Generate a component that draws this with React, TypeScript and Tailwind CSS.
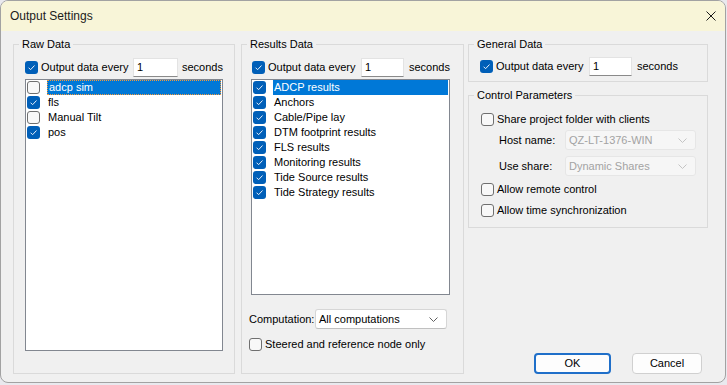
import React from 'react';

const FONT = "font-['Liberation_Sans',Arial,sans-serif]";

const Check = ({ checked }: { checked: boolean }) =>
  checked ? (
    <span className="flex h-[13px] w-[13px] shrink-0 items-center justify-center rounded-[3px] bg-[#005fb8]">
      <svg width="9" height="9" viewBox="0 0 9 9">
        <path d="M1.6 4.7 L3.6 6.7 L7.5 2.5" fill="none" stroke="#e8f0fa" strokeWidth="1" />
      </svg>
    </span>
  ) : (
    <span className="h-[13px] w-[13px] shrink-0 rounded-[3px] border border-[#6f6f6f] bg-[#f8f8f8]" />
  );

const Chevron = ({ color }: { color: string }) => (
  <svg width="9" height="5" viewBox="0 0 9 5">
    <path d="M0.5 0.5 L4.5 4.5 L8.5 0.5" fill="none" stroke={color} strokeWidth="1" />
  </svg>
);

interface SecondsRowProps {
  checkMl: string;
  labelW: string;
  inputW: string;
  secMl: string;
}

const SecondsRow = ({ checkMl, labelW, inputW, secMl }: SecondsRowProps) => (
  <div className="flex h-[19px] items-center">
    <span className={checkMl}>
      <Check checked />
    </span>
    <span className={`ml-[3px] ${labelW}`}>Output data every</span>
    <div className={`flex h-[19px] ${inputW} items-center border border-[#e3e3e3] border-b-[#8a8a8a] bg-white pl-[3px]`}>
      1
    </div>
    <span className={secMl}>seconds</span>
  </div>
);

interface Item {
  label: string;
  checked: boolean;
}

const ListBox = ({ items, w, h, focus }: { items: Item[]; w: string; h: string; focus: boolean }) => (
  <div className={`mt-[2px] ${w} ${h} border border-[#828790] bg-white`}>
    {items.map((it, i) => (
      <div key={it.label} className="flex h-[15px] items-center pl-[1px]">
        <Check checked={it.checked} />
        <span
          className={`ml-[7px] mr-[1px] flex h-[15px] flex-1 items-center pl-[1px] ${
            i === 0 ? 'bg-[#0078d7] text-white' : ''
          } ${i === 0 && focus ? 'border border-dotted border-[#f59a3a] pl-0' : ''}`}
        >
          {it.label}
        </span>
      </div>
    ))}
  </div>
);

const Combo = ({ text, w, disabled }: { text: string; w: string; disabled?: boolean }) => (
  <div
    className={`flex h-[20px] ${w} items-center justify-between rounded-[3px] border pl-[3px] pr-[8px] ${
      disabled ? 'border-[#e6e6e6] bg-[#f6f6f6] text-[#a3a3a3]' : 'border-[#d6d6d6] border-b-[#c0c0c0] bg-white'
    }`}
  >
    <span>{text}</span>
    <Chevron color={disabled ? '#c4c4c4' : '#606060'} />
  </div>
);

const Legend = ({ children }: { children: React.ReactNode }) => (
  <legend className="ml-[5px] px-[3px] leading-[13px]">{children}</legend>
);

const CheckRow = ({ label, checked, className }: { label: string; checked: boolean; className: string }) => (
  <div className={`flex h-[15px] items-center ${className}`}>
    <Check checked={checked} />
    <span className="ml-[3px]">{label}</span>
  </div>
);

export default function App() {
  const raw: Item[] = [
    { label: 'adcp sim', checked: false },
    { label: 'fls', checked: true },
    { label: 'Manual Tilt', checked: false },
    { label: 'pos', checked: true },
  ];
  const results: Item[] = [
    'ADCP results',
    'Anchors',
    'Cable/Pipe lay',
    'DTM footprint results',
    'FLS results',
    'Monitoring results',
    'Tide Source results',
    'Tide Strategy results',
  ].map((label) => ({ label, checked: true }));

  return (
    <div className={`h-[385px] w-[727px] bg-[#e9e9ee] text-[11px] text-black ${FONT}`}>
      <div className="flex h-[383px] w-[726px] flex-col overflow-hidden rounded-[8px] border border-[#a2a2a2] bg-[#f0f0f0]">
        {/* Title bar */}
        <div className="flex h-[30px] shrink-0 items-center justify-between bg-[#f8f5d8] pl-[9px]">
          <span className="text-[12px] text-[#1b1b1b]">Output Settings</span>
          <svg width="10" height="10" viewBox="0 0 10 10" className="mr-[9px]">
            <path d="M0.5 0.5 L9.5 9.5 M9.5 0.5 L0.5 9.5" stroke="#1a1a1a" strokeWidth="1" />
          </svg>
        </div>

        {/* Body */}
        <div className="flex pl-[12px] pt-[7px]">
          {/* Raw Data */}
          <fieldset className="w-[222px] border border-[#dadada]">
            <Legend>Raw Data</Legend>
            <div className="px-[11px] pb-[16px] pt-[7px]">
              <SecondsRow checkMl="" labelW="w-[92px]" inputW="w-[45px]" secMl="ml-[4px]" />
              <ListBox items={raw} w="w-[198px]" h="h-[272px]" focus />
            </div>
          </fieldset>

          {/* Results Data */}
          <fieldset className="ml-[6px] w-[223px] border border-[#dadada]">
            <Legend>Results Data</Legend>
            <div className="px-[9px] pb-[15px] pt-[7px]">
              <SecondsRow checkMl="ml-[1px]" labelW="w-[93px]" inputW="w-[43px]" secMl="ml-[5px]" />
              <ListBox items={results} w="w-[199px]" h="h-[216px]" focus={false} />
              <div className="-ml-[2px] mt-[14px] flex items-center">
                <span className="w-[66px]">Computation:</span>
                <Combo text="All computations" w="w-[132px]" />
              </div>
              <CheckRow label="Steered and reference node only" checked={false} className="-ml-[2px] mt-[8px]" />
            </div>
          </fieldset>

          {/* Right column */}
          <div className="ml-[4px] flex w-[240px] flex-col">
            <fieldset className="border border-[#dadada]">
              <Legend>General Data</Legend>
              <div className="pb-[5px] pl-[11px] pt-[6px]">
                <SecondsRow checkMl="" labelW="w-[93px]" inputW="w-[43px]" secMl="ml-[5px]" />
              </div>
            </fieldset>

            <fieldset className="mt-[7px] border border-[#dadada]">
              <Legend>Control Parameters</Legend>
              <div className="pb-[9px] pl-[12px] pt-[10px]">
                <CheckRow label="Share project folder with clients" checked={false} className="" />
                <div className="ml-[18px] mt-[3px] flex items-center">
                  <span className="w-[66px]">Host name:</span>
                  <Combo text="QZ-LT-1376-WIN" w="w-[131px]" disabled />
                </div>
                <div className="ml-[18px] mt-[6px] flex items-center">
                  <span className="w-[66px]">Use share:</span>
                  <Combo text="Dynamic Shares" w="w-[131px]" disabled />
                </div>
                <CheckRow label="Allow remote control" checked={false} className="mt-[6px]" />
                <CheckRow label="Allow time synchronization" checked={false} className="mt-[6px]" />
              </div>
            </fieldset>

            <div className="mt-[125px] flex justify-end gap-[21px] pr-[6px]">
              <button className="flex h-[21px] w-[77px] items-center justify-center rounded-[4px] border-2 border-[#1f6fc9] bg-[#fdfdfd]">
                OK
              </button>
              <button className="flex h-[21px] w-[70px] items-center justify-center rounded-[4px] border border-[#d0d0d0] bg-[#fdfdfd]">
                Cancel
              </button>
            </div>
          </div>
        </div>
      </div>
    </div>
  );
}
